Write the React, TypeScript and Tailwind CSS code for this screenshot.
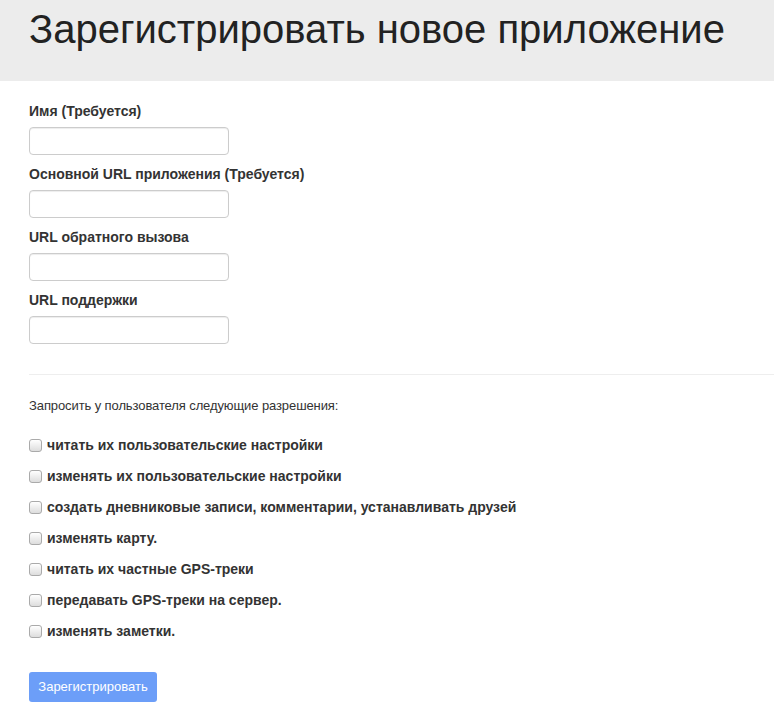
const fields = ["Имя (Требуется)", "Основной URL приложения (Требуется)", "URL обратного вызова", "URL поддержки"];

const perms = [
  "читать их пользовательские настройки",
  "изменять их пользовательские настройки",
  "создать дневниковые записи, комментарии, устанавливать друзей",
  "изменять карту.",
  "читать их частные GPS-треки",
  "передавать GPS-треки на сервер.",
  "изменять заметки.",
];

export default function App() {
  return (
    <div className="min-h-[721px] bg-white text-[#333]" style={{ fontFamily: '"Liberation Sans", Arial, sans-serif' }}>
      <header className="h-[81px] bg-[#ececec] pl-[29px] pt-[7px]">
        <h1 className="text-[40px] leading-[44px] text-[#222] whitespace-nowrap">
          Зарегистрировать новое приложение
        </h1>
      </header>

      <form className="pl-[29px] pt-[20px]" onSubmit={(e) => e.preventDefault()}>
        <div className="flex flex-col gap-[9px]">
          {fields.map((f) => (
            <div key={f} className="flex flex-col gap-[6px]">
              <label className="text-[14px] leading-[20px] font-bold text-[#333]">{f}</label>
              <input className="w-[200px] h-[28px] rounded-[4px] border border-[#ccc] bg-white shadow-[inset_0_1px_1px_rgba(0,0,0,0.075)]" />
            </div>
          ))}
        </div>

        <hr className="mt-[30px] border-t border-[#eee]" />

        <p className="mt-[22px] text-[13px] leading-[18px] tracking-[-0.1px]">Запросить у пользователя следующие разрешения:</p>

        <div className="mt-[20px] flex flex-col gap-[11px]">
          {perms.map((p) => (
            <label key={p} className="flex items-center gap-[5px] h-[20px] text-[14px] font-bold text-[#333]">
              <input type="checkbox" className="w-[13px] h-[13px] appearance-none rounded-[3px] border border-[#aaa] bg-gradient-to-b from-white to-[#ddd]" />
              {p}
            </label>
          ))}
        </div>

        <button className="mt-[31px] h-[30px] w-[128px] rounded-[3px] bg-[#6c9ef8] text-white text-[13px]">
          Зарегистрировать
        </button>
      </form>
    </div>
  );
}
